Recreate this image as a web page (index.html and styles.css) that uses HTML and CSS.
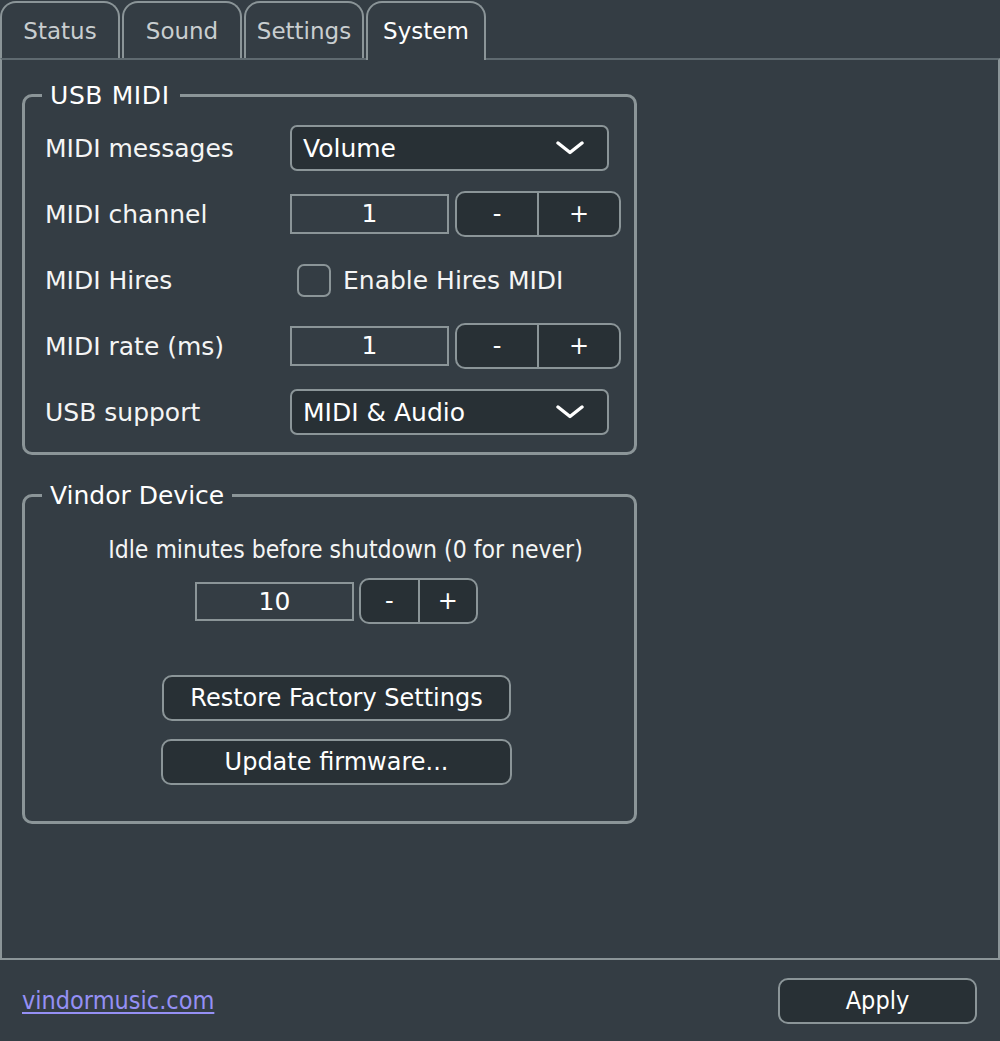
FILE: index.html
```html
<!DOCTYPE html>
<html>
<head>
<meta charset="utf-8">
<link rel="stylesheet" href="styles.css">
</head>
<body>
<div class="tabs">
  <div class="tab">Status</div>
  <div class="tab">Sound</div>
  <div class="tab">Settings</div>
  <div class="tab active">System</div>
</div>
<div class="panel">
  <fieldset class="group usb">
    <legend>USB MIDI</legend>
    <div class="form">
      <div class="label">MIDI messages</div>
      <div class="combo"><span>Volume</span><svg class="chev" width="28" height="14" viewBox="0 0 28 14"><polyline points="2,2 14,11.5 26,2" fill="none" stroke="#fff" stroke-width="3.4" stroke-linecap="round" stroke-linejoin="round"/></svg></div>

      <div class="label">MIDI channel</div>
      <div class="spin"><div class="field">1</div><div class="btns"><span class="b">-</span><span class="b">+</span></div></div>

      <div class="label">MIDI Hires</div>
      <div class="check"><span class="box"></span><span>Enable Hires MIDI</span></div>

      <div class="label">MIDI rate (ms)</div>
      <div class="spin"><div class="field">1</div><div class="btns"><span class="b">-</span><span class="b">+</span></div></div>

      <div class="label">USB support</div>
      <div class="combo"><span>MIDI &amp; Audio</span><svg class="chev" width="28" height="14" viewBox="0 0 28 14"><polyline points="2,2 14,11.5 26,2" fill="none" stroke="#fff" stroke-width="3.4" stroke-linecap="round" stroke-linejoin="round"/></svg></div>
    </div>
  </fieldset>

  <fieldset class="group device">
    <legend>Vindor Device</legend>
    <div class="dev">
      <div class="idle">Idle minutes before shutdown (0 for never)</div>
      <div class="spin small"><div class="field">10</div><div class="btns"><span class="b">-</span><span class="b">+</span></div></div>
      <div class="btn restore">Restore Factory Settings</div>
      <div class="btn update">Update firmware...</div>
    </div>
  </fieldset>
</div>
<div class="footer">
  <a class="link" href="#">vindormusic.com</a>
  <div class="btn apply">Apply</div>
</div>
</body>
</html>
```

FILE: styles.css
```css
html, body {
  margin: 0;
  padding: 0;
  background: #343d44;
  color: #f4f5f5;
  font-family: "DejaVu Sans", "Liberation Sans", sans-serif;
  font-size: 25px;
}

.tabs {
  display: flex;
  gap: 2px;
  height: 58px;
  align-items: flex-end;
}

.tab {
  box-sizing: border-box;
  width: 120px;
  height: 57px;
  border: 2px solid #8b9598;
  border-bottom: none;
  border-radius: 16px 16px 0 0;
  text-align: center;
  font-size: 23px;
  line-height: 56px;
  color: #c9ced0;
}

.tab.active {
  color: #ffffff;
  height: 59px;
  margin-bottom: -2px;
  background: #343d44;
  position: relative;
  z-index: 1;
}

.panel {
  box-sizing: border-box;
  height: 902px;
  border: 2px solid #8b9598;
  border-top: 2px solid #5f6a70;
  padding: 21px 0 0 20px;
}

.group {
  box-sizing: border-box;
  width: 615px;
  margin: 0;
  border: 3px solid #8b9598;
  border-radius: 10px;
  padding: 15px 20px 17px 20px;
  min-width: 0;
}

.group legend {
  margin-left: -3px;
  padding: 0 8px;
  line-height: 29px;
  font-size: 25px;
  color: #ffffff;
}

.usb legend {
  padding: 0 10px 0 8px;
  letter-spacing: 0.6px;
}

.form {
  display: grid;
  grid-template-columns: 245px auto;
  grid-auto-rows: 46px;
  row-gap: 20px;
  align-items: center;
}

.label {
  white-space: nowrap;
}

.combo {
  box-sizing: border-box;
  width: 319px;
  height: 46px;
  border: 2px solid #8b9598;
  border-radius: 7px;
  background: #283035;
  display: flex;
  align-items: center;
  justify-content: space-between;
  padding: 0 23px 0 11px;
  color: #ffffff;
}

.chev {
  display: block;
}

.spin {
  display: flex;
  align-items: center;
  gap: 6px;
}

.field {
  box-sizing: border-box;
  width: 159px;
  height: 40px;
  border: 2px solid #8b9598;
  text-align: center;
  line-height: 36px;
  color: #ffffff;
}

.btns {
  box-sizing: border-box;
  display: flex;
  width: 166px;
  height: 46px;
  border: 2px solid #8b9598;
  border-radius: 10px;
  background: #283035;
  overflow: hidden;
}

.btns .b {
  flex: 1;
  text-align: center;
  line-height: 42px;
  font-size: 24px;
  color: #ffffff;
}

.btns .b + .b {
  border-left: 2px solid #8b9598;
}

.check {
  display: flex;
  align-items: center;
  gap: 12px;
  padding-left: 7px;
}

.box {
  box-sizing: border-box;
  width: 34px;
  height: 33px;
  border: 2px solid #8b9598;
  border-radius: 7px;
}

.device {
  margin-top: 26px;
  padding: 25px 20px 36px 34px;
}

.device legend {
  margin-left: -17px;
}

.dev {
  display: flex;
  flex-direction: column;
  align-items: center;
}

.idle {
  font-family: "DejaVu Sans Condensed", "DejaVu Sans", sans-serif;
  font-stretch: condensed;
  font-size: 24.5px;
  line-height: 30px;
  margin-left: 18px;
  white-space: nowrap;
}

.spin.small {
  margin-top: 13px;
  gap: 5px;
}

.spin.small .field {
  height: 39px;
  line-height: 35px;
}

.spin.small .btns {
  width: 119px;
}

.btn {
  box-sizing: border-box;
  height: 46px;
  border: 2px solid #8b9598;
  border-radius: 10px;
  background: #283035;
  color: #ffffff;
  font-size: 24px;
  line-height: 42px;
  text-align: center;
}

.restore {
  width: 349px;
  margin-top: 51px;
}

.update {
  width: 351px;
  margin-top: 18px;
}

.footer {
  display: flex;
  justify-content: space-between;
  align-items: center;
  height: 81px;
  padding: 0 23px 0 22px;
}

.link {
  font-family: "DejaVu Sans Condensed", "DejaVu Sans", sans-serif;
  font-stretch: condensed;
  font-size: 25px;
  color: #9590f5;
  text-decoration: underline;
  text-underline-offset: 3px;
}

.apply {
  width: 199px;
  font-family: "DejaVu Sans Condensed", "DejaVu Sans", sans-serif;
  font-stretch: condensed;
  font-size: 25px;
}
```
